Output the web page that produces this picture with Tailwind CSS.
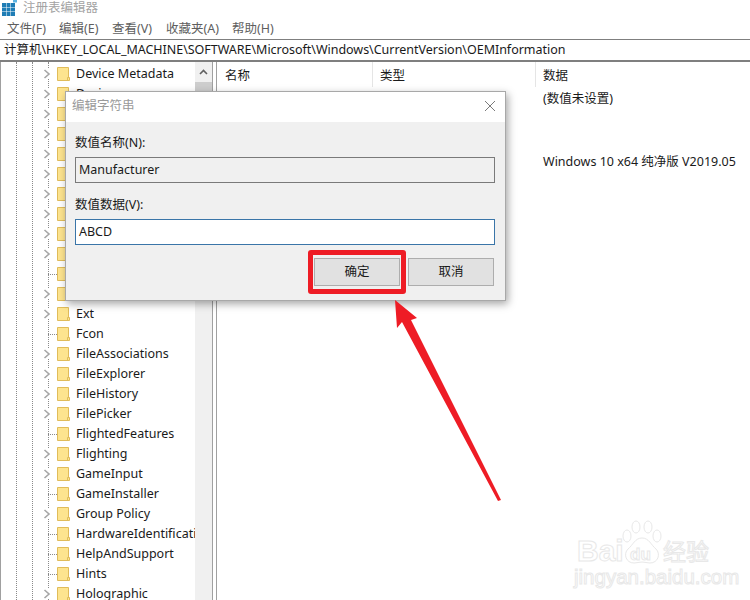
<!DOCTYPE html>
<html lang="zh-CN">

<head>
    <meta charset="UTF-8">
    <title>注册表编辑器</title>
    <script src="https://cdn.jsdelivr.net/npm/@tailwindcss/browser@4"></script>
</head>

<body class="bg-white">
    <svg class="hidden">
        <symbol id="folder" viewBox="0 0 13 14">
            <path d="M.5.5H11.5V10.5H12.5V13.5H.5Z" fill="#fde48f" stroke="#e0bc5a" />
            <path d="M10.5 13V10.5H12" fill="none" stroke="#e0bc5a" />
        </symbol>
        <symbol id="chevron" viewBox="0 0 8 10">
            <path d="M1.5 1L6 5L1.5 9" fill="none" stroke="#a6a6a6" stroke-width="1.6" />
        </symbol>
    </svg>

    <div class="relative w-[750px] h-[600px] overflow-hidden font-['Noto_Sans','Noto_Sans_CJK_SC',sans-serif] text-[12.5px] text-[#1a1a1a]">

        <!-- Title bar -->
        <div class="flex items-center h-[16px] pl-[2px]">
            <svg width="16" height="16" viewBox="0 0 16 16" class="shrink-0">
                <path d="M0 3H4V7H0ZM4.5 3H8.5V7H4.5ZM9 3H13V7H9ZM0 7.5H4V11.5H0ZM4.5 7.5H8.5V11.5H4.5ZM9 7.5H13V11.5H9ZM0 12H4V16H0ZM4.5 12H8.5V16H4.5ZM9 12H13V16H9Z" fill="#1f7db5" />
                <path d="M11 0H15V2.5H11Z" fill="#5db3e0" />
            </svg>
            <span class="ml-[5px] text-[#a3a3a3] leading-none">注册表编辑器</span>
        </div>

        <!-- Menu -->
        <div class="flex h-[23px] items-center pt-[4px] pl-[7px] text-[#5e5e5e]">
            <span class="w-[52px]">文件(F)</span>
            <span class="w-[53px]">编辑(E)</span>
            <span class="w-[54px]">查看(V)</span>
            <span class="w-[66px]">收藏夹(A)</span>
            <span>帮助(H)</span>
        </div>

        <!-- Address bar -->
        <div class="flex items-center h-[23px] pl-[4px] pt-[1px] tracking-[-0.025px] border-t border-t-[#7f7f7f] border-b-2 border-b-[#7f7f7f] bg-white">
            计算机\HKEY_LOCAL_MACHINE\SOFTWARE\Microsoft\Windows\CurrentVersion\OEMInformation
        </div>

        <div class="flex h-[538px]">
            <!-- Tree -->
            <div class="relative w-[195px] shrink-0 overflow-hidden border-l border-l-[#a0a0a0]">
                <div class="absolute left-[15px] top-0 h-full border-l border-dotted border-l-[#8a8a8a]"></div>
                <div class="absolute left-[31px] top-0 h-full border-l border-dotted border-l-[#8a8a8a]"></div>
                <div class="absolute left-[47px] top-0 h-full border-l border-dotted border-l-[#8a8a8a]"></div>
                <div class="relative flex flex-col w-max pt-[2px] whitespace-nowrap">
                    <div class="flex items-center h-5"><svg class="ml-[42px] w-2 h-2.5 bg-white"><use href="#chevron" /></svg><svg class="ml-[6px] w-[13px] h-[14px]"><use href="#folder" /></svg><span class="ml-[6px]">Device Metadata</span></div>
                    <div class="flex items-center h-5"><svg class="ml-[42px] w-2 h-2.5 bg-white"><use href="#chevron" /></svg><svg class="ml-[6px] w-[13px] h-[14px]"><use href="#folder" /></svg><span class="ml-[6px]">Devices</span></div>
                    <div class="flex items-center h-5"><svg class="ml-[42px] w-2 h-2.5 bg-white"><use href="#chevron" /></svg><svg class="ml-[6px] w-[13px] h-[14px]"><use href="#folder" /></svg></div>
                    <div class="flex items-center h-5"><svg class="ml-[42px] w-2 h-2.5 bg-white"><use href="#chevron" /></svg><svg class="ml-[6px] w-[13px] h-[14px]"><use href="#folder" /></svg></div>
                    <div class="flex items-center h-5"><svg class="ml-[42px] w-2 h-2.5 bg-white"><use href="#chevron" /></svg><svg class="ml-[6px] w-[13px] h-[14px]"><use href="#folder" /></svg></div>
                    <div class="flex items-center h-5"><svg class="ml-[42px] w-2 h-2.5 bg-white"><use href="#chevron" /></svg><svg class="ml-[6px] w-[13px] h-[14px]"><use href="#folder" /></svg></div>
                    <div class="flex items-center h-5"><svg class="ml-[42px] w-2 h-2.5 bg-white"><use href="#chevron" /></svg><svg class="ml-[6px] w-[13px] h-[14px]"><use href="#folder" /></svg></div>
                    <div class="flex items-center h-5"><svg class="ml-[42px] w-2 h-2.5 bg-white"><use href="#chevron" /></svg><svg class="ml-[6px] w-[13px] h-[14px]"><use href="#folder" /></svg></div>
                    <div class="flex items-center h-5"><svg class="ml-[42px] w-2 h-2.5 bg-white"><use href="#chevron" /></svg><svg class="ml-[6px] w-[13px] h-[14px]"><use href="#folder" /></svg></div>
                    <div class="flex items-center h-5"><svg class="ml-[42px] w-2 h-2.5 bg-white"><use href="#chevron" /></svg><svg class="ml-[6px] w-[13px] h-[14px]"><use href="#folder" /></svg></div>
                    <div class="flex items-center h-5"><div class="ml-[47px] w-[9px] border-t border-dotted border-t-[#8a8a8a]"></div><svg class="w-[13px] h-[14px]"><use href="#folder" /></svg></div>
                    <div class="flex items-center h-5"><svg class="ml-[42px] w-2 h-2.5 bg-white"><use href="#chevron" /></svg><svg class="ml-[6px] w-[13px] h-[14px]"><use href="#folder" /></svg><span class="ml-[6px]">Explorer</span></div>
                    <div class="flex items-center h-5"><svg class="ml-[42px] w-2 h-2.5 bg-white"><use href="#chevron" /></svg><svg class="ml-[6px] w-[13px] h-[14px]"><use href="#folder" /></svg><span class="ml-[6px]">Ext</span></div>
                    <div class="flex items-center h-5"><div class="ml-[47px] w-[9px] border-t border-dotted border-t-[#8a8a8a]"></div><svg class="w-[13px] h-[14px]"><use href="#folder" /></svg><span class="ml-[6px]">Fcon</span></div>
                    <div class="flex items-center h-5"><svg class="ml-[42px] w-2 h-2.5 bg-white"><use href="#chevron" /></svg><svg class="ml-[6px] w-[13px] h-[14px]"><use href="#folder" /></svg><span class="ml-[6px]">FileAssociations</span></div>
                    <div class="flex items-center h-5"><svg class="ml-[42px] w-2 h-2.5 bg-white"><use href="#chevron" /></svg><svg class="ml-[6px] w-[13px] h-[14px]"><use href="#folder" /></svg><span class="ml-[6px]">FileExplorer</span></div>
                    <div class="flex items-center h-5"><svg class="ml-[42px] w-2 h-2.5 bg-white"><use href="#chevron" /></svg><svg class="ml-[6px] w-[13px] h-[14px]"><use href="#folder" /></svg><span class="ml-[6px]">FileHistory</span></div>
                    <div class="flex items-center h-5"><svg class="ml-[42px] w-2 h-2.5 bg-white"><use href="#chevron" /></svg><svg class="ml-[6px] w-[13px] h-[14px]"><use href="#folder" /></svg><span class="ml-[6px]">FilePicker</span></div>
                    <div class="flex items-center h-5"><div class="ml-[47px] w-[9px] border-t border-dotted border-t-[#8a8a8a]"></div><svg class="w-[13px] h-[14px]"><use href="#folder" /></svg><span class="ml-[6px]">FlightedFeatures</span></div>
                    <div class="flex items-center h-5"><svg class="ml-[42px] w-2 h-2.5 bg-white"><use href="#chevron" /></svg><svg class="ml-[6px] w-[13px] h-[14px]"><use href="#folder" /></svg><span class="ml-[6px]">Flighting</span></div>
                    <div class="flex items-center h-5"><svg class="ml-[42px] w-2 h-2.5 bg-white"><use href="#chevron" /></svg><svg class="ml-[6px] w-[13px] h-[14px]"><use href="#folder" /></svg><span class="ml-[6px]">GameInput</span></div>
                    <div class="flex items-center h-5"><div class="ml-[47px] w-[9px] border-t border-dotted border-t-[#8a8a8a]"></div><svg class="w-[13px] h-[14px]"><use href="#folder" /></svg><span class="ml-[6px]">GameInstaller</span></div>
                    <div class="flex items-center h-5"><svg class="ml-[42px] w-2 h-2.5 bg-white"><use href="#chevron" /></svg><svg class="ml-[6px] w-[13px] h-[14px]"><use href="#folder" /></svg><span class="ml-[6px]">Group Policy</span></div>
                    <div class="flex items-center h-5"><div class="ml-[47px] w-[9px] border-t border-dotted border-t-[#8a8a8a]"></div><svg class="w-[13px] h-[14px]"><use href="#folder" /></svg><span class="ml-[6px]">HardwareIdentification</span></div>
                    <div class="flex items-center h-5"><div class="ml-[47px] w-[9px] border-t border-dotted border-t-[#8a8a8a]"></div><svg class="w-[13px] h-[14px]"><use href="#folder" /></svg><span class="ml-[6px]">HelpAndSupport</span></div>
                    <div class="flex items-center h-5"><div class="ml-[47px] w-[9px] border-t border-dotted border-t-[#8a8a8a]"></div><svg class="w-[13px] h-[14px]"><use href="#folder" /></svg><span class="ml-[6px]">Hints</span></div>
                    <div class="flex items-center h-5"><svg class="ml-[42px] w-2 h-2.5 bg-white"><use href="#chevron" /></svg><svg class="ml-[6px] w-[13px] h-[14px]"><use href="#folder" /></svg><span class="ml-[6px]">Holographic</span></div>
                </div>
            </div>

            <!-- Scrollbar -->
            <div class="w-[17px] shrink-0 bg-[#f0f0f0]">
                <div class="flex items-center justify-center h-[20px]">
                    <svg width="9" height="6" viewBox="0 0 9 6"><path d="M1 5L4.5 1.5L8 5" fill="none" stroke="#606060" stroke-width="1.6" /></svg>
                </div>
                <div class="h-[70px] bg-[#cdcdcd]"></div>
            </div>

            <!-- Splitter -->
            <div class="w-[5px] shrink-0 border-l border-r border-[#a0a0a0]"></div>

            <!-- Values pane -->
            <div class="flex-1">
                <div class="flex h-[25px] items-center">
                    <div class="w-[156px] h-full pl-[8px] pt-[3px] flex items-center border-r border-r-[#e5e5e5]">名称</div>
                    <div class="w-[163px] h-full pl-[7px] pt-[3px] flex items-center border-r border-r-[#e5e5e5]">类型</div>
                    <div class="pl-[7px] pt-[3px]">数据</div>
                </div>
                <div class="flex h-5 items-center pl-[326px] mt-[2px]">(数值未设置)</div>
                <div class="flex h-5 items-center pl-[326px] mt-[43px] whitespace-nowrap">Windows 10 x64 纯净版 V2019.05</div>
            </div>
        </div>

        <!-- Edit string dialog -->
        <div class="absolute left-[65px] top-[91px] w-[441px] h-[210px] flex flex-col bg-[#f0f0f0] border border-[#a8a8a8] shadow-[2px_3px_8px_rgba(0,0,0,0.35)]">
            <div class="flex items-center justify-between h-[30px] shrink-0 pl-[6px] pr-[10px] pb-[2px] bg-white text-[#9a9a9a]">
                <span>编辑字符串</span>
                <svg width="10" height="10" viewBox="0 0 10 10"><path d="M0 0L10 10M10 0L0 10" stroke="#7a7a7a" stroke-width="1" /></svg>
            </div>
            <div class="flex flex-col px-[9px]">
                <label class="mt-[12px] h-[17px] leading-[17px]">数值名称(N):</label>
                <div class="mt-[6px] h-[26px] w-[420px] flex items-center pl-[3px] border border-[#7a7a7a] bg-[#f0f0f0]">Manufacturer</div>
                <label class="mt-[13px] h-[17px] leading-[17px]">数值数据(V):</label>
                <div class="mt-[6px] h-[26px] w-[420px] flex items-center pl-[3px] border border-[#3a75a8] bg-white">ABCD</div>
                <div class="flex mt-[13px] ml-[239px] gap-2">
                    <button class="w-[86px] h-[28px] border border-[#adadad] bg-[#e1e1e1]">确定</button>
                    <button class="w-[86px] h-[28px] border border-[#adadad] bg-[#e1e1e1]">取消</button>
                </div>
            </div>
        </div>

        <!-- Red annotations -->
        <div class="absolute left-[308px] top-[250px] w-[98px] h-[44px] border-[5px] border-[#ee1c25] rounded-[3px]"></div>
        <svg class="absolute left-0 top-0 pointer-events-none" width="750" height="600" viewBox="0 0 750 600">
            <polygon points="395,300 417,318 411,320 501,500 498,501 402,322 397,328" fill="#ee1c25" />
        </svg>

        <!-- Watermark -->
        <div class="absolute left-[574px] top-[520px] w-[140px] h-[70px] text-white [-webkit-text-stroke:1px_#e8e8e8]">
            <svg class="absolute left-[48px] top-0" width="40" height="46" viewBox="0 0 40 46" fill="none" stroke="#e8e8e8">
                <ellipse cx="5" cy="16" rx="4" ry="6" />
                <ellipse cx="14" cy="7" rx="4" ry="6" />
                <ellipse cx="26" cy="7" rx="4" ry="6" />
                <ellipse cx="35" cy="16" rx="4" ry="6" />
                <path d="M20 18C13 18 11 25 6 29C1 34 4 43 12 43C15 43 17 42 20 42C23 42 25 43 28 43C36 43 39 34 34 29C29 25 27 18 20 18Z" />
            </svg>
            <span class="absolute left-[3px] top-[13px] text-[30px] leading-[36px] font-['Liberation_Sans',sans-serif] font-bold">Bai</span>
            <span class="absolute left-[56px] top-[25px] text-[17px] leading-[20px] font-['Liberation_Sans',sans-serif] font-bold">du</span>
            <span class="absolute left-[89px] top-[17px] text-[23px] leading-[28px]">经验</span>
            <span class="absolute left-0 top-[47px] text-[20.5px] leading-[20px] font-['Liberation_Sans',sans-serif]">jingyan.baidu.com</span>
        </div>
    </div>
</body>

</html>
